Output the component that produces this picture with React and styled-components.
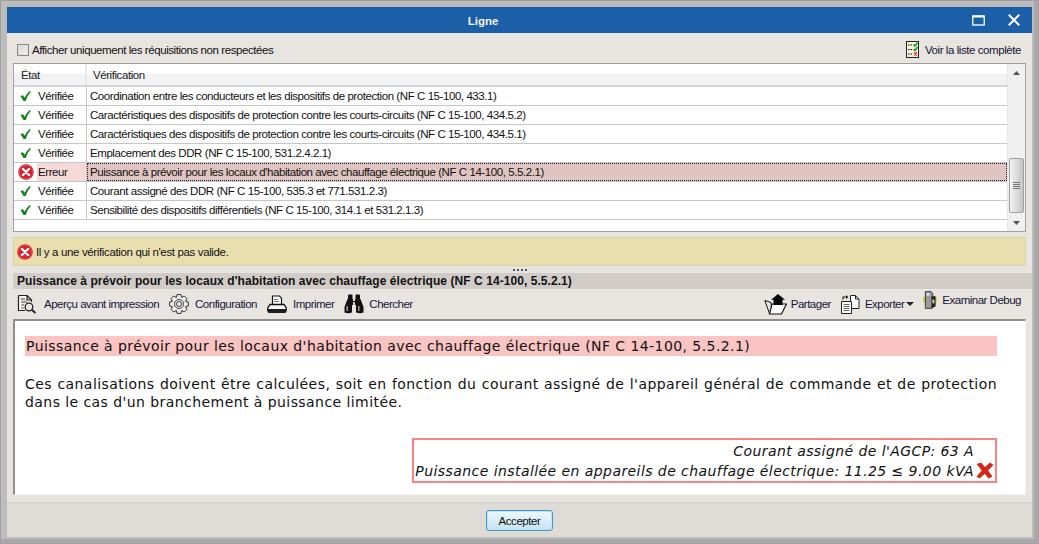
import React from "react";
import styled, { createGlobalStyle } from "styled-components";

const Global = createGlobalStyle`
  html, body { margin: 0; padding: 0; background: #fff; }
  * { box-sizing: border-box; }
`;
const UI = `"Liberation Sans", Arial, sans-serif`;
const Window = styled.div`
  width: 1039px; height: 544px; display: flex; flex-direction: column;
  padding: 7px; background: #bcbcbc;
  box-shadow: inset 0 0 0 1px #a0a0a0, inset -5px -5px 0 0 #a8a8a8;
  font: 11.5px ${UI}; letter-spacing: -0.43px; color: #111; overflow: hidden;
`;
const Inner = styled.div`
  flex: 1; display: flex; flex-direction: column; background: #e8e4df; min-height: 0;
`;
const TitleBar = styled.div`
  height: 26px; flex: none; display: flex; align-items: center; background: #1a5fa8; color: #f4f4f4;
`;
const Title = styled.div`flex: 1; text-align: center; font-weight: 700; font-size: 11.5px; letter-spacing: 0; padding-top: 1px;`;
const WinButtons = styled.div`width: 73px; flex: none; display: flex; align-items: center; gap: 23px; padding-left: 13px;`;
const OptionRow = styled.div`
  height: 30px; flex: none; display: flex; align-items: center; justify-content: space-between;
  padding: 3px 11px 0 10px;
`;
const CheckLabel = styled.label`display: flex; align-items: center; gap: 3px;`;
const CheckBox = styled.span`
  width: 12px; height: 12px; border: 1px solid #8a8a8a; display: block;
  background: linear-gradient(135deg, #d4d4d4, #f4f4f4);
  box-shadow: inset 0 0 0 1px #e0e0e0;
`;
const ToolLabel = styled.span`
  display: flex; align-items: center; gap: ${p => p.$gap ?? 5}px; color: #16163a;
  margin-top: ${p => p.$up ? -9 : 0}px;
`;
const List = styled.div`
  margin: 0 6px; height: 169px; flex: none; display: flex; background: #fff; border: 1px solid #a2a2a6;
  border-top-color: #9c9c9c;
`;
const ListBody = styled.div`flex: 1; min-width: 0; display: flex; flex-direction: column;`;
const Header = styled.div`
  display: grid; grid-template-columns: 73px 1fr; height: 23px; flex: none; border-bottom: 2px solid #d4d4d4;
  background: linear-gradient(#fff 0, #fff 45%, #f1f2f4 46%, #f1f2f4 100%);
`;
const HeadCell = styled.div`
  display: flex; align-items: center; padding-left: ${p => p.$pad}px; color: #222;
  border-right: ${p => p.$line ? "2px solid #e8e8ec" : "none"};
`;
const Row = styled.div`
  display: grid; grid-template-columns: 73px 1fr; height: 19px; flex: none; border-bottom: 1px solid #c6c6c6;
`;
const StateCell = styled.div`
  display: flex; align-items: center; border-right: 1px solid #c6c6c6;
`;
const IconSlot = styled.span`width: 23px; flex: none; display: flex; justify-content: center; align-items: center;`;
const StateText = styled.span`
  flex: 1; align-self: stretch; display: flex; align-items: center; padding-left: 1px;
  background: ${p => p.$error ? "#f4d9d8" : "transparent"};
`;
const CheckText = styled.div`
  display: flex; align-items: center; padding-left: 3px; white-space: nowrap;
  background: ${p => p.$error ? "#dfc4c1" : "transparent"};
  outline: ${p => p.$error ? "1px dotted #222" : "none"}; outline-offset: -1px;
`;
const ScrollTrack = styled.div`
  width: 18px; flex: none; background: #f0f0f0; display: flex; flex-direction: column; align-items: center;
  padding: 0 1px 0 1px; border-left: 1px solid #e6e6e6;
`;
const ScrollEnd = styled.div`height: 17px; flex: none; display: flex; align-items: center; justify-content: center;`;
const ScrollBody = styled.div`flex: 1; width: 100%; display: flex; flex-direction: column; justify-content: flex-end; padding-bottom: 1px;`;
const Thumb = styled.div`
  height: 55px; border: 1px solid #a0a0a0; border-radius: 2px;
  background: linear-gradient(90deg, #f4f4f4, #dcdcdc 50%, #c4c4c4);
  display: flex; flex-direction: column; justify-content: center; align-items: center; gap: 1px;
`;
const Grip = styled.i`display: block; width: 7px; height: 1px; background: #777;`;
const Message = styled.div`
  margin: 5px 6px 0; height: 29px; flex: none; background: #e9deae; border: 1px solid #ddd2a6;
  display: flex; align-items: center; gap: 3px; padding-left: 3px; letter-spacing: -0.36px;
`;
const Splitter = styled.div`
  height: 7px; flex: none; display: flex; justify-content: center; align-items: center; gap: 2px; padding-top: 1px;
`;
const Dot = styled.i`display: block; width: 2px; height: 2px; background: #555;`;
const SectionTitle = styled.div`
  height: 16px; flex: none; margin-left: 6px; background: #d1ccc8; display: flex; align-items: center;
  padding-left: 4px; font-weight: 700; font-size: 12px; letter-spacing: 0.06px; color: #111; white-space: nowrap;
`;
const Toolbar = styled.div`
  height: 30px; flex: none; display: flex; align-items: center; justify-content: space-between; padding: 0 11px 0 10px;
`;
const Tools = styled.div`display: flex; align-items: center; gap: ${p => p.$gap}px; letter-spacing: -0.5px;`;
const CaretSlot = styled.span`display: flex; margin-left: -3px;`;
const Report = styled.div`
  margin: 0 6px; height: 176px; flex: none; background: #fff; padding: 15px 28px 0 10px;
  border: 1px solid #f2f1ee; border-top: 2px solid #8e8e8e; border-left: 2px solid #8e8e8e;
  font-family: "DejaVu Sans", Verdana, sans-serif; font-size: 14px; letter-spacing: 0.43px; color: #111;
  display: flex; flex-direction: column;
`;
const Heading = styled.div`height: 20px; background: #f9c4c2; padding-left: 1px; line-height: 21px; white-space: nowrap;`;
const Paragraph = styled.p`
  margin: 19px 0 0; line-height: 18px; text-align: justify;
`;
const ResultBox = styled.div`
  margin: 27px 0 0 auto; width: 585px; height: 45px; border: 2px solid #f98282; padding: 1px 21px 0 0;
  font-style: italic; text-align: right; line-height: 20px; white-space: nowrap; position: relative; letter-spacing: 0.43px;
`;
const Cross = styled.span`position: absolute; right: 1px; top: 22px; display: flex;`;
const Footer = styled.div`
  flex: 1; margin-top: 7px; background: #dfdbd7; border-top: 1px solid #cfcfcf;
  display: flex; justify-content: center; align-items: flex-start; padding-top: 7px;
`;
const Accept = styled.button`
  width: 67px; height: 21px; border: 1px solid #3d9ac8; border-radius: 3px; padding: 0;
  background: linear-gradient(#eef7fc, #c6e2f3); font: 11.5px ${UI}; letter-spacing: -0.43px; color: #111;
  box-shadow: inset 0 0 0 1px #bfe4f6;
`;

const Tick = () => (
  <svg width="11" height="12" viewBox="0 0 13 13"><path d="M.5 6.500 L3.500 5.500 L5.500 8.500 Q7.500 4 11.500 0.500 L12.800 1.500 Q9 5.500 6.700 12.500 L4.200 12.500 Z" fill="#0f841a" /></svg>
);
const ErrorIcon = ({ size = 16 }) => (
  <svg width={size} height={size} viewBox="0 0 16 16">
    <circle cx="8" cy="8" r="7.800" fill="#d8202f" />
    <circle cx="8" cy="8" r="6.900" fill="#d8202f" stroke="#f07a80" strokeWidth=".5" />
    <path d="M5 5 L11 11 M11 5 L5 11" stroke="#fff" strokeWidth="2.400" strokeLinecap="round" />
  </svg>
);
const ChecklistIcon = () => (
  <svg width="13" height="17" viewBox="0 0 13 17">
    <rect x=".5" y=".5" width="12" height="16" fill="#f6f3dc" stroke="#222" />
    <path d="M2 4h4M2 8.500h4M2 13h4" stroke="#111" strokeDasharray="1.500 1" />
    <path d="M7.500 3.500l1.500 1.500 2.500-3.500M7.500 8l1.500 1.500 2.500-3.500" stroke="#129a20" strokeWidth="1.500" fill="none" />
    <path d="M8 11.500l3 3M11 11.500l-3 3" stroke="#e02020" strokeWidth="1.400" />
  </svg>
);
const PreviewIcon = () => (
  <svg width="20" height="20" viewBox="0 0 20 20" fill="none" stroke="#222">
    <path d="M1.500 1.500H10L14.500 6V8M10 1.500V6H14.500M1.500 1.500V16.500H8" fill="#fff" strokeWidth="1.200" />
    <path d="M4 5h4M4 8h6M4 11h3M4 14h3" stroke="#555" />
    <circle cx="12" cy="13" r="3.800" fill="#e6e6ea" strokeWidth="1.300" />
    <path d="M14.800 15.800l3.700 3.200" strokeWidth="1.900" />
  </svg>
);
const gearPath = Array.from({ length: 8 }).map((_, i) => {
  const pt = (r, deg) => {
    const a = (i * 45 + deg) * Math.PI / 180;
    return `${(10 + r * Math.cos(a)).toFixed(2)} ${(10 + r * Math.sin(a)).toFixed(2)}`;
  };
  return `${i ? "L" : "M"}${pt(7, -22)} L${pt(9.600, -12)} L${pt(9.600, 12)} L${pt(7, 22)}`;
}).join(" ") + " Z";
const GearIcon = () => (
  <svg width="20" height="20" viewBox="0 0 20 20" fill="#ededed" stroke="#333">
    <path d={gearPath} />
    <circle cx="10" cy="10" r="4.600" fill="#cfcfcf" stroke="#555" />
    <circle cx="10" cy="10" r="2.400" fill="#f4f4f4" stroke="#444" />
  </svg>
);
const PrinterIcon = () => (
  <svg width="20" height="18" viewBox="0 0 20 18" stroke="#111">
    <path d="M5.500 1h7l2 2.500V10h-9z" fill="#fff" strokeWidth="1.200" />
    <path d="M7 4.500h4M7 6.500h5" stroke="#777" />
    <path d="M3 9.500h14l2.300 3.500v2H.7V13z" fill="#f4f4f4" strokeWidth="1.300" />
    <rect x="1" y="14.800" width="18" height="2.600" rx="1" fill="#222" />
  </svg>
);
const BinocularsIcon = () => (
  <svg width="20" height="20" viewBox="0 0 20 20" fill="#111">
    <rect x="4" y="0.500" width="4.500" height="5" rx="1" />
    <rect x="11.500" y="0.500" width="4.500" height="5" rx="1" />
    <path d="M3.500 5h5.500v2h2V5h5.500L19.500 13v5.500q-3.500 1.500-7.500 0v-7.500H8v7.500q-4 1.500-7.500 0V13z" />
    <rect x="2.500" y="12" width="1.500" height="5" fill="#999" stroke="none" />
    <rect x="14" y="12" width="1.500" height="5" fill="#999" stroke="none" />
    <rect x="9" y="8" width="2" height="3" fill="#ccc" stroke="none" />
  </svg>
);
const ShareIcon = () => (
  <svg width="23" height="21" viewBox="0 0 23 21">
    <path d="M.8 6.500L7 8.500 8 19.500H5.500z" fill="#e8e8e8" stroke="#111" />
    <path d="M8 10h14.500L17.500 20H5.500z" fill="#fff" stroke="#111" strokeWidth="1.200" />
    <path d="M14 0l7 5.700h-2.500V11H9.500V5.700H7z" fill="#080808" />
  </svg>
);
const ExportIcon = () => (
  <svg width="20" height="20" viewBox="0 0 20 20" fill="#fff" stroke="#222">
    <path d="M10.500 1.500h5l3.500 3.500v9.500h-8.500z" />
    <path d="M15.500 1.500v3.500H19" fill="none" />
    <path d="M1.500 7.500h10v12h-10z" />
    <path d="M3.500 10.500h6M3.500 12.500h6M3.500 14.500h6M3.500 16.500h6" stroke="#666" />
    <path d="M3 5.500V3h4" fill="none" strokeWidth="1.200" />
    <path d="M6 1l2.500 2L6 5z" fill="#222" stroke="none" />
  </svg>
);
const DebugIcon = () => (
  <svg width="14" height="18" viewBox="0 0 15 19">
    <rect x="0" y="6" width="15" height="6" fill="#dcd23a" />
    <path d="M2.500 0.500h6l2 2v15.500l-2 .5h-6z" fill="#999" stroke="#333" />
    <path d="M9 5.500h4.500v11L9 18z" fill="#222" />
    <rect x="4" y="2" width="3" height="3" fill="#ddd" />
    <rect x="10" y="9" width="2.200" height="4" fill="#ccc" />
  </svg>
);
const RedCross = () => (
  <svg width="18" height="17" viewBox="0 0 18 17"><path d="M.5 2L5 .5 9 5 14 .5 17.500 3 12 8.500 16.500 14.500 12.500 16.500 8.800 11.800 3.500 16.500.5 14.500 5.800 8.500z" fill="#d8251c" /></svg>
);
const Caret = () => (
  <svg width="8" height="4" viewBox="0 0 8 4"><path d="M0 0h8L4 4z" fill="#222" /></svg>
);
const Maximize = () => (
  <svg width="13" height="11" viewBox="0 0 13 11" fill="none" stroke="#fff"><rect x=".75" y="1" width="11.500" height="9" strokeWidth="1.300" /><path d="M1 1.500h11" strokeWidth="2" /></svg>
);
const Close = () => (
  <svg width="12" height="12" viewBox="0 0 11 11" stroke="#fff" strokeWidth="1.800"><path d="M.7.700l9.600 9.600M10.300.700L.7 10.300" /></svg>
);
const Arrow = ({ down }) => (
  <svg width="7" height="4" viewBox="0 0 7 4"><path d={down ? "M0 0h7L3.500 4z" : "M0 4h7L3.500 0z"} fill="#555" /></svg>
);

const rows = [
  ["Coordination entre les conducteurs et les dispositifs de protection (NF C 15-100, 433.1)"],
  ["Caractéristiques des dispositifs de protection contre les courts-circuits (NF C 15-100, 434.5.2)"],
  ["Caractéristiques des dispositifs de protection contre les courts-circuits (NF C 15-100, 434.5.1)"],
  ["Emplacement des DDR (NF C 15-100, 531.2.4.2.1)"],
  ["Puissance à prévoir pour les locaux d'habitation avec chauffage électrique (NF C 14-100, 5.5.2.1)", true],
  ["Courant assigné des DDR (NF C 15-100, 535.3 et 771.531.2.3)"],
  ["Sensibilité des dispositifs différentiels (NF C 15-100, 314.1 et 531.2.1.3)"],
];

export default function App() {
  return (
    <Window>
      <Global />
      <Inner>
        <TitleBar>
          <Title>Ligne</Title>
          <WinButtons><Maximize /><Close /></WinButtons>
        </TitleBar>
        <OptionRow>
          <CheckLabel><CheckBox />Afficher uniquement les réquisitions non respectées</CheckLabel>
          <ToolLabel $gap={6}><ChecklistIcon />Voir la liste complète</ToolLabel>
        </OptionRow>
        <List>
          <ListBody>
            <Header>
              <HeadCell $pad={7} $line>État</HeadCell>
              <HeadCell $pad={6}>Vérification</HeadCell>
            </Header>
            {rows.map(([text, err], i) => (
              <Row key={i}>
                <StateCell>
                  <IconSlot>{err ? <ErrorIcon /> : <Tick />}</IconSlot>
                  <StateText $error={err}>{err ? "Erreur" : "Vérifiée"}</StateText>
                </StateCell>
                <CheckText $error={err}>{text}</CheckText>
              </Row>
            ))}
          </ListBody>
          <ScrollTrack>
            <ScrollEnd><Arrow /></ScrollEnd>
            <ScrollBody>
              <Thumb><Grip /><Grip /><Grip /><Grip /></Thumb>
            </ScrollBody>
            <ScrollEnd><Arrow down /></ScrollEnd>
          </ScrollTrack>
        </List>
        <Message><ErrorIcon />Il y a une vérification qui n'est pas valide.</Message>
        <Splitter><Dot /><Dot /><Dot /><Dot /></Splitter>
        <SectionTitle>Puissance à prévoir pour les locaux d'habitation avec chauffage électrique (NF C 14-100, 5.5.2.1)</SectionTitle>
        <Toolbar>
          <Tools $gap={10}>
            <ToolLabel $gap={7}><PreviewIcon />Aperçu avant impression</ToolLabel>
            <ToolLabel $gap={6}><GearIcon />Configuration</ToolLabel>
            <ToolLabel $gap={6}><PrinterIcon />Imprimer</ToolLabel>
            <ToolLabel $gap={5}><BinocularsIcon />Chercher</ToolLabel>
          </Tools>
          <Tools $gap={9}>
            <ToolLabel $gap={4}><ShareIcon />Partager</ToolLabel>
            <ToolLabel $gap={5}><ExportIcon />Exporter<CaretSlot><Caret /></CaretSlot></ToolLabel>
            <ToolLabel $gap={5} $up><DebugIcon />Examinar Debug</ToolLabel>
          </Tools>
        </Toolbar>
        <Report>
          <Heading>Puissance à prévoir pour les locaux d'habitation avec chauffage électrique (NF C 14-100, 5.5.2.1)</Heading>
          <Paragraph>Ces canalisations doivent être calculées, soit en fonction du courant assigné de l'appareil général de commande et de protection dans le cas d'un branchement à puissance limitée.</Paragraph>
          <ResultBox>
            <div>Courant assigné de l'AGCP: 63 A</div>
            <div>Puissance installée en appareils de chauffage électrique: 11.25 ≤ 9.00 kVA</div>
            <Cross><RedCross /></Cross>
          </ResultBox>
        </Report>
        <Footer><Accept>Accepter</Accept></Footer>
      </Inner>
    </Window>
  );
}
